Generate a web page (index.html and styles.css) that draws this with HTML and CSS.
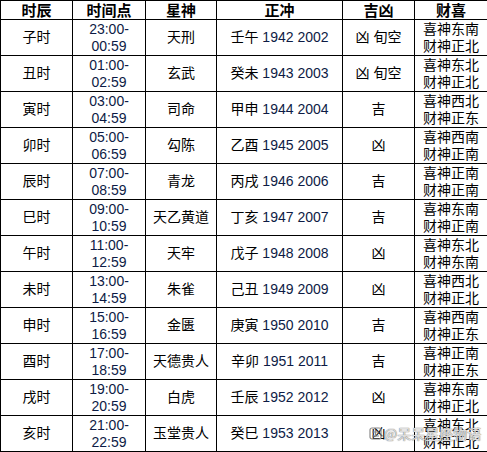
FILE: index.html
```html
<!DOCTYPE html>
<html lang="zh">
<head>
<meta charset="utf-8">
<link rel="stylesheet" href="styles.css">
</head>
<body>
<div class="wrap">
<table class="tbl">
<colgroup>
<col class="c1"><col class="c2"><col class="c3"><col class="c4"><col class="c5"><col class="c6">
</colgroup>
<thead>
<tr class="hd"><th>时辰</th><th>时间点</th><th>星神</th><th>正冲</th><th>吉凶</th><th>财喜</th></tr>
</thead>
<tbody>
<tr><td>子时</td><td class="num">23:00-<br>00:59</td><td>天刑</td><td>壬午 <span class="num">1942 2002</span></td><td>凶 旬空</td><td>喜神东南<br>财神正北</td></tr>
<tr><td>丑时</td><td class="num">01:00-<br>02:59</td><td>玄武</td><td>癸未 <span class="num">1943 2003</span></td><td>凶 旬空</td><td>喜神东北<br>财神正北</td></tr>
<tr><td>寅时</td><td class="num">03:00-<br>04:59</td><td>司命</td><td>甲申 <span class="num">1944 2004</span></td><td>吉</td><td>喜神西北<br>财神正东</td></tr>
<tr><td>卯时</td><td class="num">05:00-<br>06:59</td><td>勾陈</td><td>乙酉 <span class="num">1945 2005</span></td><td>凶</td><td>喜神西南<br>财神正南</td></tr>
<tr><td>辰时</td><td class="num">07:00-<br>08:59</td><td>青龙</td><td>丙戌 <span class="num">1946 2006</span></td><td>吉</td><td>喜神正南<br>财神正南</td></tr>
<tr><td>巳时</td><td class="num">09:00-<br>10:59</td><td>天乙黄道</td><td>丁亥 <span class="num">1947 2007</span></td><td>吉</td><td>喜神东南<br>财神正南</td></tr>
<tr><td>午时</td><td class="num">11:00-<br>12:59</td><td>天牢</td><td>戊子 <span class="num">1948 2008</span></td><td>凶</td><td>喜神东北<br>财神东南</td></tr>
<tr><td>未时</td><td class="num">13:00-<br>14:59</td><td>朱雀</td><td>己丑 <span class="num">1949 2009</span></td><td>凶</td><td>喜神西北<br>财神正北</td></tr>
<tr><td>申时</td><td class="num">15:00-<br>16:59</td><td>金匮</td><td>庚寅 <span class="num">1950 2010</span></td><td>吉</td><td>喜神西南<br>财神正东</td></tr>
<tr><td>酉时</td><td class="num">17:00-<br>18:59</td><td>天德贵人</td><td>辛卯 <span class="num">1951 2011</span></td><td>吉</td><td>喜神正南<br>财神正东</td></tr>
<tr><td>戌时</td><td class="num">19:00-<br>20:59</td><td>白虎</td><td>壬辰 <span class="num">1952 2012</span></td><td>凶</td><td>喜神东南<br>财神正北</td></tr>
<tr><td>亥时</td><td class="num">21:00-<br>22:59</td><td>玉堂贵人</td><td>癸巳 <span class="num">1953 2013</span></td><td>凶</td><td>喜神东北<br>财神正北</td></tr>
</tbody>
</table>
<div class="mark"><svg class="mark-icon" width="13" height="13" viewBox="0 0 13 13"><rect x="1" y="1" width="11" height="11" rx="2" fill="none" stroke="#8a8a8a" stroke-width="1.2"/><path d="M3 5h7M6.5 3v7M3 9h7" stroke="#8a8a8a" stroke-width="1.2" fill="none"/></svg><span class="mark-text">@呆呆星座物语</span></div>
</div>
</body>
</html>
```
FILE: styles.css
```css
html, body {
  margin: 0;
  padding: 0;
  background: #ffffff;
}
.wrap {
  position: relative;
  width: 487px;
  height: 452px;
}
.tbl {
  border-collapse: collapse;
  table-layout: fixed;
  width: 487px;
  font-family: "Liberation Sans", "Noto Sans CJK SC", sans-serif;
  font-size: 14px;
  color: #000;
}
.c1 { width: 72px; }
.c2 { width: 73px; }
.c3 { width: 71px; }
.c4 { width: 126px; }
.c5 { width: 72px; }
.c6 { width: 73px; }
.tbl th, .tbl td {
  border: 1px solid #000;
  padding: 0;
  text-align: center;
  vertical-align: middle;
  overflow: hidden;
  white-space: nowrap;
}
.tbl th {
  font-weight: bold;
  font-size: 15px;
  line-height: 17px;
  height: 18px;
}
.tbl td {
  height: 35px;
  line-height: 17px;
}
.num {
  color: #0d1b45;
}
.mark {
  position: absolute;
  left: 369px;
  top: 425px;
  display: flex;
  align-items: center;
  gap: 2px;
}
.mark-icon {
  display: block;
}
.mark-text {
  font-family: "Noto Sans CJK SC", sans-serif;
  font-size: 14px;
  line-height: 16px;
  color: rgba(255, 255, 255, 0.75);
  text-shadow: 0 0 1px #777, 0 0 1px #777;
}
```
